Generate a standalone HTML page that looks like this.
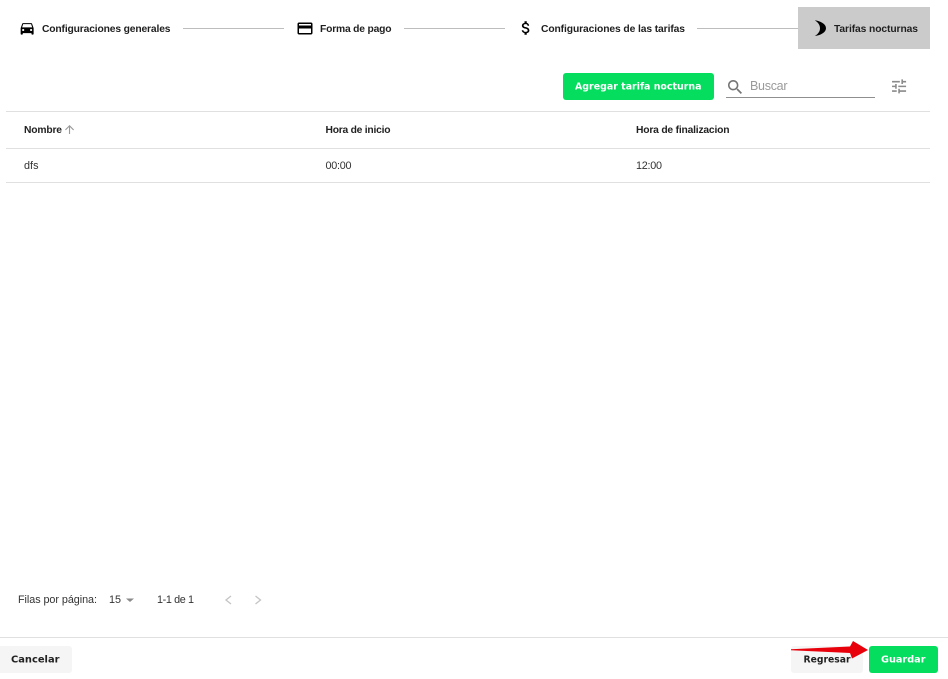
<!DOCTYPE html>
<html lang="es">
<head>
<meta charset="utf-8">
<title>Tarifas nocturnas</title>
<style>
html,body{margin:0;padding:0;background:#fff;width:948px;height:679px;overflow:hidden}
svg{display:block}
text{font-family:"Liberation Sans",sans-serif}
.s{font-size:10.3px;font-weight:700;fill:#1f1f1f}
.h{font-size:10.3px;font-weight:700;fill:#222}
.c{font-size:10.8px;fill:#333}
.p{font-size:10.8px;fill:#333}
.b{font-family:"DejaVu Sans",sans-serif;font-size:9.5px;font-weight:700}
</style>
</head>
<body>
<svg width="948" height="679" viewBox="0 0 948 679" xmlns="http://www.w3.org/2000/svg">
<rect width="948" height="679" fill="#fff"/>

<rect x="798" y="7" width="132" height="42" fill="#cbcbcb"/>
<g fill="#bdbdbd">
<rect x="183" y="28" width="101" height="1"/>
<rect x="404" y="28" width="101" height="1"/>
<rect x="697" y="28" width="101" height="1"/>
</g>

<path transform="translate(18.5 19.5) scale(.72)" fill="#000" d="M18.92 6.01C18.72 5.42 18.16 5 17.5 5h-11c-.66 0-1.21.42-1.42 1.01L3 12v8c0 .55.45 1 1 1h1c.55 0 1-.45 1-1v-1h12v1c0 .55.45 1 1 1h1c.55 0 1-.45 1-1v-8l-2.08-5.99zM6.5 16c-.83 0-1.5-.67-1.5-1.5S5.67 13 6.5 13s1.5.67 1.5 1.5S7.33 16 6.5 16zm11 0c-.83 0-1.5-.67-1.5-1.5s.67-1.5 1.5-1.5 1.5.67 1.5 1.5-.67 1.5-1.5 1.5zM5 11l1.5-4.5h11L19 11H5z"/>
<path transform="translate(296 19.5) scale(.75)" fill="#000" d="M20 4H4c-1.11 0-1.99.89-1.99 2L2 18c0 1.11.89 2 2 2h16c1.11 0 2-.89 2-2V6c0-1.11-.89-2-2-2zm0 14H4v-6h16v6zm0-10H4V6h16v2z"/>
<path transform="translate(517 19) scale(.75)" fill="#000" d="M11.8 10.9c-2.27-.59-3-1.2-3-2.15 0-1.09 1.01-1.85 2.7-1.85 1.78 0 2.44.85 2.5 2.1h2.21c-.07-1.72-1.12-3.3-3.21-3.81V3h-3v2.16c-1.94.42-3.5 1.68-3.5 3.61 0 2.31 1.91 3.46 4.7 4.13 2.5.6 3 1.48 3 2.41 0 .69-.49 1.79-2.7 1.79-2.06 0-2.87-.92-2.98-2.1h-2.2c.12 2.19 1.76 3.42 3.68 3.83V21h3v-2.15c1.95-.37 3.5-1.5 3.5-3.55 0-2.84-2.43-3.81-4.7-4.4z"/>
<path fill="#000" d="M814.8 20.3C820.5 21.2 826 24 826 28.2C826 32.4 820.5 35.2 814.8 36C818.6 33.6 820 31 820 28.2C820 25.4 818.6 22.8 814.8 20.3z"/>

<text class="s" x="42" y="32" textLength="128.5" lengthAdjust="spacing">Configuraciones generales</text>
<text class="s" x="320" y="32" textLength="71.5" lengthAdjust="spacing">Forma de pago</text>
<text class="s" x="541" y="32" textLength="144" lengthAdjust="spacing">Configuraciones de las tarifas</text>
<text class="s" x="834" y="32" textLength="84" lengthAdjust="spacing">Tarifas nocturnas</text>

<rect x="563" y="73" width="151" height="27" rx="3" fill="#04dd5e"/>
<text class="b" x="575" y="89.5" fill="#fff" textLength="126.5" lengthAdjust="spacingAndGlyphs">Agregar tarifa nocturna</text>

<path transform="translate(725.6 77.6) scale(.8)" fill="#757575" d="M15.5 14h-.79l-.28-.27C15.41 12.59 16 11.11 16 9.5 16 5.91 13.09 3 9.5 3S3 5.91 3 9.5 5.91 16 9.5 16c1.61 0 3.09-.59 4.23-1.57l.27.28v.79l5 4.99L20.49 19l-4.99-5zm-6 0C7.01 14 5 11.99 5 9.5S7.01 5 9.5 5 14 7.01 14 9.5 11.99 14 9.5 14z"/>
<text x="750" y="90" font-size="12.5" fill="#9a9a9a" textLength="37.5" lengthAdjust="spacing">Buscar</text>
<rect x="726" y="97" width="149" height="1" fill="#8f8f8f"/>
<path transform="translate(889.7 77) scale(.78)" fill="#8a8a8a" d="M3 17v2h6v-2H3zM3 5v2h10V5H3zm10 16v-2h8v-2h-8v-2h-2v6h2zM7 9v2H3v2h4v2h2V9H7zm14 4v-2H11v2h10zm-6-4h2V7h4V5h-4V3h-2v6z"/>

<g fill="#e0e0e0">
<rect x="6" y="111" width="924" height="1"/>
<rect x="6" y="148" width="924" height="1"/>
<rect x="6" y="182" width="924" height="1"/>
</g>

<text class="h" x="24" y="133" textLength="38" lengthAdjust="spacing">Nombre</text>
<path transform="translate(62.8 122.8) scale(.56)" fill="#999" d="M4 12l1.41 1.41L11 7.83V20h2V7.83l5.58 5.59L20 12l-8-8-8 8z"/>
<text class="h" x="325.5" y="133" textLength="65" lengthAdjust="spacing">Hora de inicio</text>
<text class="h" x="636" y="133" textLength="93.5" lengthAdjust="spacing">Hora de finalizacion</text>

<text class="c" x="24" y="169" textLength="14.5" lengthAdjust="spacing">dfs</text>
<text class="c" x="325.5" y="169" textLength="26" lengthAdjust="spacing">00:00</text>
<text class="c" x="636" y="169" textLength="26" lengthAdjust="spacing">12:00</text>

<text class="p" x="18" y="603" textLength="79" lengthAdjust="spacing">Filas por página:</text>
<text class="p" x="109" y="603" textLength="12" lengthAdjust="spacing">15</text>
<path fill="#8a8a8a" d="M126 598.5h8l-4 3.5z"/>
<text class="p" x="157" y="603" textLength="37" lengthAdjust="spacing">1-1 de 1</text>
<path fill="none" stroke="#c4c4c4" stroke-width="1.3" d="M231 596l-5 4 5 4"/>
<path fill="none" stroke="#c4c4c4" stroke-width="1.3" d="M255.5 596l5 4-5 4"/>

<rect x="0" y="637" width="948" height="1" fill="#e0e0e0"/>

<rect x="-4" y="646" width="76" height="27" rx="3" fill="#f5f5f5"/>
<text class="b" x="11" y="662.5" fill="#222" textLength="48.5" lengthAdjust="spacingAndGlyphs">Cancelar</text>

<rect x="791" y="646" width="72" height="27" rx="3" fill="#f5f5f5"/>
<text class="b" x="803.5" y="662.5" fill="#222" textLength="47" lengthAdjust="spacingAndGlyphs">Regresar</text>

<rect x="869" y="646" width="69" height="27" rx="3" fill="#04dd5e"/>
<text class="b" x="881" y="662.5" fill="#fff" textLength="44.5" lengthAdjust="spacingAndGlyphs">Guardar</text>

<path fill="#e8000b" d="M791 649.3L850 646.5L853 641L868 650L852 658.5L850 653L791 650.3z"/>
</svg>
</body>
</html>
